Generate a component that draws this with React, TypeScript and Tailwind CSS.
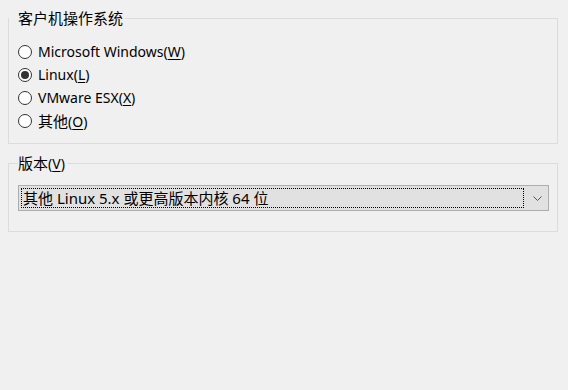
import React from 'react';

const font = { fontFamily: '"Noto Sans", "Noto Sans CJK SC", sans-serif' };
const cjk = { fontFamily: '"Noto Sans CJK SC", sans-serif' };

function Radio({ label, accel, zh, checked }: { label: string; accel: string; zh?: boolean; checked?: boolean }) {
    return (
        <div className="flex items-center h-[23px]">
            <div className="shrink-0 w-[14px] h-[14px] rounded-full border border-[#333333] bg-white flex items-center justify-center ml-[9px]">
                {checked && <div className="w-[8px] h-[8px] rounded-full bg-[#333333]" />}
            </div>
            <span className="ml-[6px] text-[14px] leading-[23px] text-black whitespace-nowrap">
                {zh ? <span className="text-[15px]" style={cjk}>{label}</span> : label}
                (<span className="underline underline-offset-2">{accel}</span>)
            </span>
        </div>
    );
}

export default function App() {
    return (
        <div className="w-[568px] h-[390px] bg-[#f0f0f0] pt-[8px] pl-[8px] pr-[10px]" style={font}>
            {/* guest OS */}
            <fieldset className="border border-[#dcdcdc] h-[136px] pt-[12px]">
                <legend className="h-[20px] pl-[9px] pr-[2px] text-[15px] leading-[20px] text-black" style={cjk}>客户机操作系统</legend>
                <Radio label="Microsoft Windows" accel="W" />
                <Radio label="Linux" accel="L" checked />
                <Radio label="VMware ESX" accel="X" />
                <Radio label="其他" accel="O" zh />
            </fieldset>

            {/* version */}
            <fieldset className="border border-[#dcdcdc] mt-[9px] pt-[12px] pb-[20px] pl-[9px] pr-[8px]">
                <legend className="h-[20px] pr-[2px] text-[14px] leading-[20px] text-black">
                    <span className="text-[15px]" style={cjk}>版本</span>(<span className="underline underline-offset-2">V</span>)
                </legend>
                <div className="h-[26px] border border-[#adadad] bg-[#e1e1e1] flex items-stretch">
                    <div className="flex-1 m-[2px] border border-dotted border-black flex items-center pl-[1px] text-[15px] text-black leading-none whitespace-pre">
                        其他 Linux 5.x 或更高版本内核 64 位
                    </div>
                    <div className="w-[22px] flex items-center justify-center">
                        <svg width="9" height="5" viewBox="0 0 9 5" fill="none">
                            <path d="M0.5 0.5 L4.5 4.5 L8.5 0.5" stroke="#555555" strokeWidth="1" />
                        </svg>
                    </div>
                </div>
            </fieldset>
        </div>
    );
}
